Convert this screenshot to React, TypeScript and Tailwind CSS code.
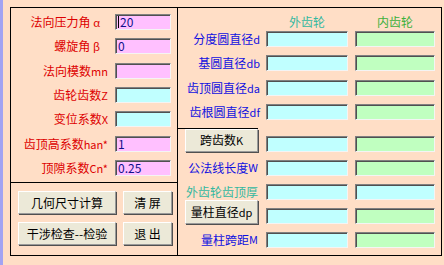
import React from 'react'

const FONT = "font-[family-name:'Noto_Sans_CJK_SC',sans-serif]"

const FILL: Record<string, string> = {
  pink: 'bg-[#ffc0ff]',
  cyan: 'bg-[#c0ffff]',
  green: 'bg-[#c0ffc0]',
}

function Field({ fill, value, width, caret }: { fill: string; value?: string; width: string; caret?: boolean }) {
  return (
    <div
      className={`${width} ${FILL[fill]} h-[16px] shrink-0 flex items-center pl-[2px] border border-t-[#808080] border-l-[#808080] border-r-[#f4f4f4] border-b-[#f4f4f4] shadow-[inset_1px_1px_0_#505050] text-[12px] leading-[14px] text-[#10108a]`}
    >
      {caret && <span className="w-px h-[12px] bg-black mr-px" />}
      {value}
    </div>
  )
}

function Btn({ children, className }: { children: React.ReactNode; className: string }) {
  return (
    <button
      className={`${className} shrink-0 flex items-center justify-center bg-[#ece9d8] border border-t-white border-l-white border-r-[#9a9a9a] border-b-[#9a9a9a] shadow-[1px_1px_0_#505050] text-[12px] text-black`}
    >
      {children}
    </button>
  )
}

// chinese text with a narrower latin suffix, like the old bitmap font
function Label({ zh, en }: { zh: string; en: string }) {
  return (
    <>
      {zh}
      <span className="text-[11px]">{en}</span>
    </>
  )
}

const INPUTS = [
  { zh: '法向压力角 ', en: 'α', fill: 'pink', value: '20', pad: 'pr-[8px]', caret: true },
  { zh: '螺旋角 ', en: 'β', fill: 'pink', value: '0', pad: 'pr-[8px]' },
  { zh: '法向模数', en: 'mn', fill: 'pink', value: '' },
  { zh: '齿轮齿数', en: 'Z', fill: 'cyan', value: '' },
  { zh: '变位系数', en: 'X', fill: 'cyan', value: '' },
  { zh: '齿顶高系数', en: 'han*', fill: 'pink', value: '1' },
  { zh: '顶隙系数', en: 'Cn*', fill: 'pink', value: '0.25' },
]

const DIAMETERS = [
  ['分度圆直径', 'd'],
  ['基圆直径', 'db'],
  ['齿顶圆直径', 'da'],
  ['齿根圆直径', 'df'],
]

export default function App() {
  return (
    <div className={`${FONT} w-[444px] h-[265px] bg-[#ffdec6] flex overflow-hidden`}>
      <div className="w-[3px] h-full bg-[#a3a3f2]" />

      <div className="flex pl-[7px] pt-[7px]">
        {/* input column */}
        <div className="w-[168px] h-[249px] border border-black flex flex-col">
          <div className="h-[174px] pt-[6px] flex flex-col gap-[8.33px]">
            {INPUTS.map((r) => (
              <div key={r.zh} className="h-[16px] flex items-center">
                <div className={`w-[97px] text-right text-[12px] leading-none text-[#dd0000] whitespace-nowrap ${r.pad ?? ''}`}>
                  <Label zh={r.zh} en={r.en} />
                </div>
                <div className="ml-[7px]">
                  <Field fill={r.fill} value={r.value} width="w-[56px]" caret={r.caret} />
                </div>
              </div>
            ))}
          </div>
          <div className="flex-1 border-t border-black pt-[8px] pl-[7px] flex flex-col gap-[8px]">
            <div className="flex gap-[7px]">
              <Btn className="w-[98px] h-[23px]">几何尺寸计算</Btn>
              <Btn className="w-[49px] h-[23px]">清 屏</Btn>
            </div>
            <div className="flex gap-[7px]">
              <Btn className="w-[98px] h-[23px]">干涉检查--检验</Btn>
              <Btn className="w-[49px] h-[23px]">退 出</Btn>
            </div>
          </div>
        </div>

        {/* results */}
        <div className="w-[264px] h-[249px] border-t border-r border-b border-black flex flex-col">
          <div className="h-[23px] flex items-center pt-[4px] text-[12px]">
            <div className="w-[88px]" />
            <div className="w-[82px] text-center text-[#33b8a0]">外齿轮</div>
            <div className="w-[80px] ml-[7px] text-center text-[#3cb03c]">内齿轮</div>
          </div>
          <div className="flex flex-col gap-[8.33px]">
            {DIAMETERS.map(([zh, en]) => (
              <div key={zh} className="h-[16px] flex items-center">
                <div className="w-[88px] pr-[6px] text-right text-[12px] leading-none text-[#1010e0] whitespace-nowrap">
                  <Label zh={zh} en={en} />
                </div>
                <Field fill="cyan" width="w-[82px]" />
                <div className="ml-[7px]">
                  <Field fill="green" width="w-[80px]" />
                </div>
              </div>
            ))}
          </div>

          <div className="mt-[8px] w-[80px] h-px bg-black" />

          <div className="h-[23px] flex items-end">
            <div className="w-[88px] h-full pl-[7px]">
              <Btn className="w-[73px] h-[23px]">
                <Label zh="跨齿数" en="K" />
              </Btn>
            </div>
            <Field fill="cyan" width="w-[82px]" />
            <div className="ml-[7px]">
              <Field fill="green" width="w-[80px]" />
            </div>
          </div>
          <div className="h-[24px] flex items-end">
            <div className="w-[88px] h-[16px] pr-[8px] flex items-center justify-end text-[12px] leading-none text-[#1010e0] whitespace-nowrap">
              <Label zh="公法线长度" en="W" />
            </div>
            <Field fill="cyan" width="w-[82px]" />
            <div className="ml-[7px]">
              <Field fill="green" width="w-[80px]" />
            </div>
          </div>
          <div className="h-[24px] flex items-end">
            <div className="w-[88px] h-[16px] pr-[8px] flex items-center justify-end text-[12px] leading-none text-[#33b8a0] whitespace-nowrap">外齿轮齿顶厚</div>
            <Field fill="cyan" width="w-[82px]" />
            <div className="ml-[7px]">
              <Field fill="cyan" width="w-[80px]" />
            </div>
          </div>
          <div className="h-[24px] flex items-end">
            <div className="w-[88px] h-full pl-[7px]">
              <Btn className="w-[73px] h-[24px]">
                <Label zh="量柱直径" en="dp" />
              </Btn>
            </div>
            <Field fill="cyan" width="w-[82px]" />
            <div className="ml-[7px]">
              <Field fill="green" width="w-[80px]" />
            </div>
          </div>
          <div className="h-[24px] flex items-end">
            <div className="w-[88px] h-[16px] pr-[8px] flex items-center justify-end text-[12px] leading-none text-[#1010e0] whitespace-nowrap">
              <Label zh="量柱跨距" en="M" />
            </div>
            <Field fill="cyan" width="w-[82px]" />
            <div className="ml-[7px]">
              <Field fill="green" width="w-[80px]" />
            </div>
          </div>
        </div>
      </div>
    </div>
  )
}
